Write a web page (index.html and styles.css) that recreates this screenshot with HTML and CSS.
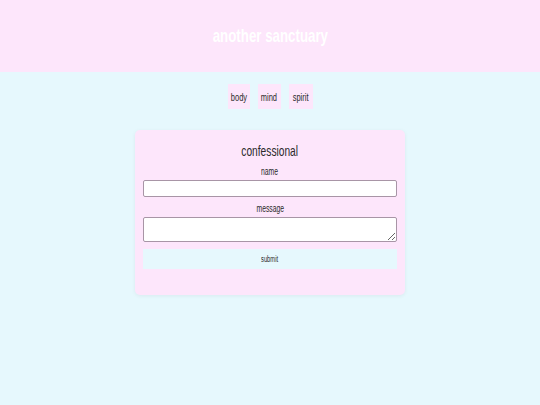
FILE: index.html
```html
<!DOCTYPE html>
<html>
<head>
<meta charset="utf-8">
<link rel="stylesheet" href="styles.css">
</head>
<body>
<header class="site-header">
  <h1 class="site-title"><span class="narrow">another sanctuary</span></h1>
</header>
<nav class="nav">
  <a class="nav-item" href="#"><span class="narrow">body</span></a>
  <a class="nav-item" href="#"><span class="narrow">mind</span></a>
  <a class="nav-item" href="#"><span class="narrow">spirit</span></a>
</nav>
<main class="main">
  <form class="card">
    <h2 class="card-title"><span class="narrow">confessional</span></h2>
    <label class="label" for="name"><span class="narrow">name</span></label>
    <input class="input" id="name" type="text">
    <label class="label" for="message"><span class="narrow">message</span></label>
    <textarea class="textarea" id="message"></textarea>
    <button class="submit" type="button"><span class="narrow">submit</span></button>
  </form>
</main>
</body>
</html>
```
FILE: styles.css
```css
* { box-sizing: border-box; }
html, body {
  margin: 0;
  padding: 0;
  height: 100%;
}
body {
  background: #e6f8fd;
  font-family: "Liberation Sans", Arial, sans-serif;
  color: #2a2a2a;
}
.narrow {
  display: inline-block;
  transform: scaleX(0.68);
  transform-origin: center;
  white-space: nowrap;
}
.site-header {
  background: #fde6fb;
  height: 72px;
  display: flex;
  align-items: center;
  justify-content: center;
}
.site-title {
  margin: 0;
  color: #ffffff;
  font-size: 19px;
  font-weight: bold;
}
.site-title .narrow { transform: scaleX(0.7); }
.nav {
  display: flex;
  justify-content: center;
  gap: 8px;
  margin-top: 12px;
}
.nav-item {
  background: #fde6fb;
  color: #2a2a2a;
  text-decoration: none;
  font-size: 11px;
  height: 25px;
  display: flex;
  align-items: center;
  justify-content: center;
}
.nav-item:nth-child(1) { width: 22px; }
.nav-item:nth-child(2) { width: 23px; }
.nav-item:nth-child(3) { width: 24px; }
.main {
  display: flex;
  justify-content: center;
  margin-top: 21px;
}
.card {
  width: 270px;
  height: 165px;
  background: #fde6fb;
  border-radius: 5px;
  box-shadow: 0 1px 4px rgba(0, 0, 0, 0.06);
  padding: 12px 8px;
  display: flex;
  flex-direction: column;
  align-items: stretch;
}
.card-title {
  margin: 0;
  font-size: 15px;
  font-weight: normal;
  text-align: center;
  line-height: 18px;
}
.label {
  text-align: center;
  font-size: 10px;
  margin-top: 6px;
  line-height: 12px;
}
.input {
  height: 17px;
  margin: 2px 0 0;
  border: 1px solid #a895a6;
  border-radius: 2px;
  background: #fff;
}
.input + .label { margin-top: 6px; }
.textarea {
  height: 25px;
  margin: 2px 0 0;
  border: 1px solid #a895a6;
  border-radius: 2px;
  background: #fff;
  resize: vertical;
}
.submit {
  margin-top: 7px;
  height: 20px;
  border: none;
  background: #e6f8fd;
  font-family: inherit;
  font-size: 8.5px;
  color: #2a2a2a;
}
```
